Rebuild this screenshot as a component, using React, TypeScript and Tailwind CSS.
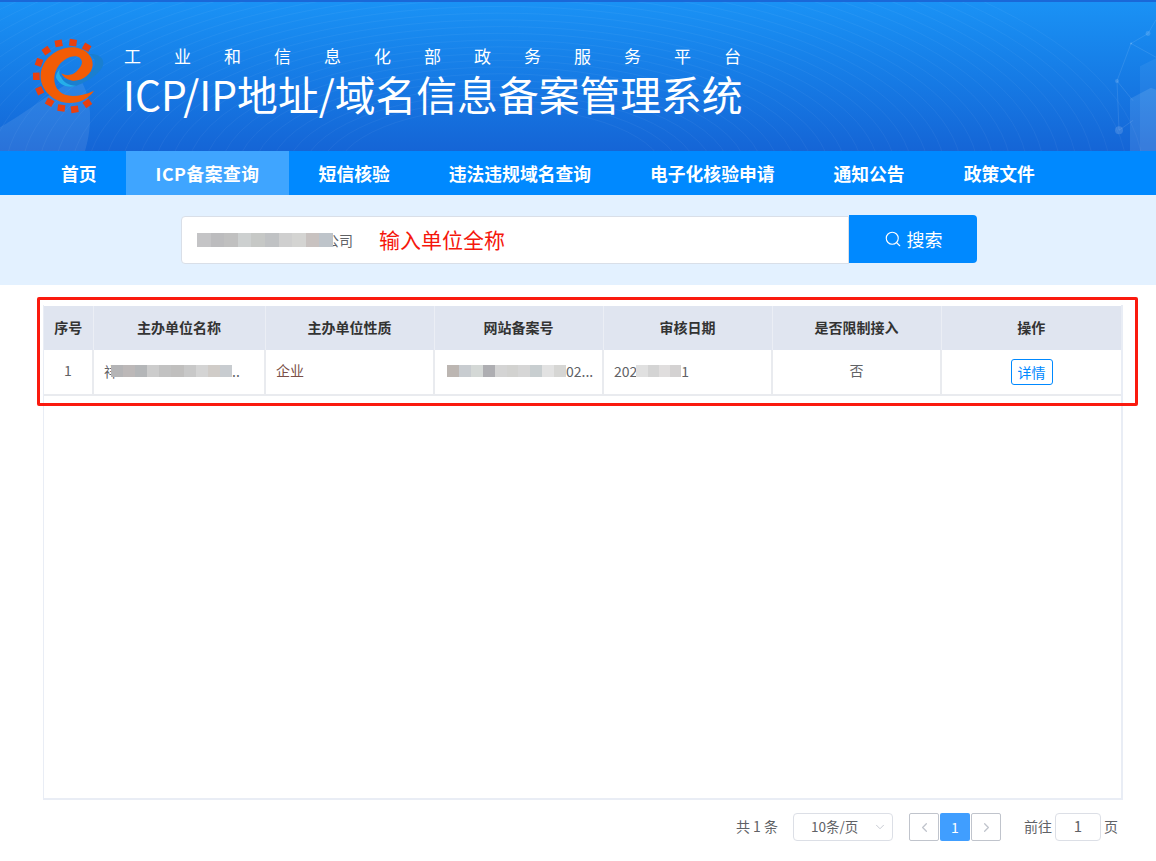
import { ChevronDown, ChevronLeft, ChevronRight, Search } from 'lucide-react';

const navItems = ['首页', 'ICP备案查询', '短信核验', '违法违规域名查询', '电子化核验申请', '通知公告', '政策文件'];
const platform = ['工', '业', '和', '信', '息', '化', '部', '政', '务', '服', '务', '平', '台'];
const columns = ['序号', '主办单位名称', '主办单位性质', '网站备案号', '审核日期', '是否限制接入', '操作'];

const searchBlur = ['bg-[#c4c4c6]', 'bg-[#bcbcbe]', 'bg-[#c0c0c0]', 'bg-[#cdd0d0]', 'bg-[#c6c8c6]', 'bg-[#c0c2c4]', 'bg-[#cfcfcf]', 'bg-[#d4d4d2]', 'bg-[#c8c2c0]', 'bg-[#bec4ca]'];
const nameBlur = ['bg-[#b4b4b6]', 'bg-[#bcb8b8]', 'bg-[#b4b6b8]', 'bg-[#cccccc]', 'bg-[#c2c2c2]', 'bg-[#c0bfbe]', 'bg-[#c8c8c8]', 'bg-[#d4d4d4]', 'bg-[#d0ccc8]', 'bg-[#c8ccd0]'];
const numberBlur = ['bg-[#bcb6b2]', 'bg-[#c8ccd0]', 'bg-[#d4d8d6]', 'bg-[#aeaeb2]', 'bg-[#d4d4d4]', 'bg-[#d2d2d0]', 'bg-[#d6d6d6]', 'bg-[#c8ced0]', 'bg-[#e2e2e2]', 'bg-[#d6d6d4]'];
const dateBlur = ['bg-[#e0e0e0]', 'bg-[#d4d4d4]', 'bg-[#e0dede]', 'bg-[#d4d2d2]'];

function Blur({ colors, className }: { colors: string[]; className: string }) {
    return (
        <span className={`relative inline-flex align-middle ${className}`}>
            {colors.map((c, i) => (
                <span key={i} className={`h-full flex-1 ${c}`} />
            ))}
        </span>
    );
}

function Logo() {
    const teeth = [
        [92, 28, -10], [135, 26, 8], [176, 40, 30], [55, 50, -35], [33, 85, -70], [25, 127, 88],
        [35, 170, 65], [65, 205, 30], [100, 222, 8], [140, 226, -8], [178, 208, -35],
    ];
    return (
        <svg viewBox="0 0 252 252" className="h-[84px] w-[84px] shrink-0">
            {teeth.map(([x, y, r], i) => (
                <rect key={i} x={x - 11} y={y - 10} width="22" height="20" fill="#e8400f" transform={`rotate(${r} ${x} ${y})`} />
            ))}
            <path d="M84 130C92 150 115 165 145 155C185 142 228 110 226 85C224 65 200 58 184 60C203 72 208 90 190 112C170 136 125 150 100 130C94 124 92 112 97 104C88 112 84 120 84 130Z" fill="#1a7fd0" />
            <path d="M84 130C92 150 115 165 145 155C125 156 105 145 100 130C94 124 92 112 97 104C88 112 84 120 84 130Z" fill="#25aeea" />
            <path d="M198 170C180 198 140 214 102 204C64 192 36 160 38 122C42 76 84 42 130 40C168 40 196 64 194 94C192 120 164 142 134 140C118 138 106 130 100 118C112 126 132 126 146 112C160 98 168 84 156 72C142 60 112 70 94 92C76 114 72 150 94 172C112 190 150 192 198 170Z" fill="#f25c05" />
        </svg>
    );
}

function HeaderArt() {
    const rings = Array.from({ length: 30 }, (_, i) => 110 + i * 11);
    return (
        <svg viewBox="0 0 1156 151" preserveAspectRatio="none" className="absolute inset-0 h-full w-full">
            {rings.map((r) => (
                <ellipse key={r} cx="500" cy="175" rx={r * 1.5} ry={r * 0.62} fill="none" stroke="#ffffff" strokeOpacity="0.05" strokeWidth="1" />
            ))}
            <path d="M0 127C30 110 62 82 80 78C92 96 93 125 85 151H0Z" fill="#ffffff" fillOpacity="0.09" />
            <g fill="#ffffff">
                <path d="M1140 65L1156 57V151H1140Z" fillOpacity="0.06" />
                <path d="M1130 98L1151 87L1156 89V151H1130Z" fillOpacity="0.1" />
                <circle cx="1119" cy="130" r="4" fillOpacity="0.14" />
                <circle cx="1117" cy="80" r="2" fillOpacity="0.14" />
                <circle cx="1131" cy="42" r="1" fillOpacity="0.2" />
                <circle cx="1148" cy="32" r="2.5" fillOpacity="0.14" />
            </g>
            <path d="M1156 18L1148 32L1131 42L1117 80L1119 130M1131 42L1156 56M1117 80L1133 100M1119 130L1133 120" fill="none" stroke="#ffffff" strokeOpacity="0.1" />
        </svg>
    );
}

export default function App() {
    return (
        <div className="relative h-[861px] w-[1156px] overflow-hidden bg-white font-['Noto_Sans_CJK_SC','Liberation_Sans',sans-serif]">
            <header className="relative h-[151px] overflow-hidden border-t-2 border-[#1a68d8] bg-gradient-to-b from-[#1a92f5] to-[#1565d6]">
                <HeaderArt />
                <div className="relative flex items-start pl-[28px] pt-[32px]">
                    <Logo />
                    <div className="ml-[12px] mt-[10px] w-[650px] text-white">
                        <div className="flex h-6 items-center text-[17px] leading-6">
                            {platform.map((c, i) => (
                                <span key={i} className="w-[50px] shrink-0">{c}</span>
                            ))}
                        </div>
                        <h1 className="-ml-px mt-px whitespace-nowrap text-[40.8px] font-normal leading-[50px]">ICP/IP地址/域名信息备案管理系统</h1>
                    </div>
                </div>
            </header>

            <nav className="flex h-11 bg-[#0089ff] pl-[31.5px] text-[17.8px] font-bold leading-[44px] text-white">
                {navItems.map((item) => (
                    <a key={item} className={`whitespace-nowrap px-[29.5px] ${item === 'ICP备案查询' ? 'bg-[#3fa5ff] tracking-[0.5px]' : ''}`}>
                        {item}
                    </a>
                ))}
            </nav>

            <section className="flex h-[90px] items-start justify-center bg-[#e3f1ff] pl-[2px] pt-5">
                <div className="mt-px flex h-12 w-[668px] items-center rounded-l border border-[#d9dfe8] bg-white pl-[15px] text-[14px] text-[#606266]">
                    <Blur colors={searchBlur} className="z-10 h-[14px] w-[136px]" />
                    <span className="-ml-[8px] whitespace-nowrap">公司</span>
                    <span className="ml-[26px] text-[21px] text-[#f5170c]">输入单位全称</span>
                </div>
                <button className="flex h-12 w-[128px] items-center justify-center gap-[5px] rounded-r bg-[#0089ff] text-[18px] text-white">
                    <Search size={18} strokeWidth={1.5} />
                    搜索
                </button>
            </section>

            <section className="ml-[43px] mt-5 h-[495px] w-[1080px] border-x border-b-2 border-r-2 border-[#e9edf5] pt-px">
                <table className="w-full table-fixed border-collapse text-[14px]">
                    <colgroup>
                        <col className="w-[49px]" />
                        <col className="w-[172px]" />
                        <col className="w-[169px]" />
                        <col className="w-[169px]" />
                        <col className="w-[169px]" />
                        <col className="w-[169px]" />
                        <col />
                    </colgroup>
                    <thead>
                        <tr className="h-[44px] bg-[#e0e5f0] text-[#333333]">
                            {columns.map((c) => (
                                <th key={c} className="border-r border-[#ebeef5] pb-px text-[14px] font-bold last:border-r-0">{c}</th>
                            ))}
                        </tr>
                    </thead>
                    <tbody>
                        <tr className="h-[45px] border-b-2 border-[#e9ebef] text-[#606266]">
                            <td className="border-r-2 border-[#e9ebef] pb-[3px] text-center">1</td>
                            <td className="whitespace-nowrap border-r-2 border-[#e9ebef] pb-[3px] pl-[10px]">
                                <span className="align-middle">祥</span>
                                <Blur colors={nameBlur} className="-ml-[7px] h-[12px] w-[121px]" />
                                <span className="align-middle">..</span>
                            </td>
                            <td className="border-r-2 border-[#e9ebef] pb-[3px] pl-[10px] text-[#7a5048]">企业</td>
                            <td className="whitespace-nowrap border-r-2 border-[#e9ebef] pb-[3px] pl-[12px]">
                                <Blur colors={numberBlur} className="h-[12px] w-[119px]" />
                                <span className="align-middle">02...</span>
                            </td>
                            <td className="whitespace-nowrap border-r-2 border-[#e9ebef] pb-[3px] pl-[10px]">
                                <span className="align-middle">202</span>
                                <Blur colors={dateBlur} className="-ml-px h-[12px] w-[45px]" />
                                <span className="align-middle">1</span>
                            </td>
                            <td className="border-r-2 border-[#e9ebef] pb-[3px] text-center">否</td>
                            <td className="text-center">
                                <button className="h-[26px] w-[42px] rounded-[3px] border border-[#0089ff] text-[14px] leading-[22px] text-[#0089ff]">详情</button>
                            </td>
                        </tr>
                    </tbody>
                </table>
            </section>

            <footer className="mr-[38px] mt-[13px] flex h-7 items-center justify-end text-[14px] text-[#606266]">
                <span className="pb-px">共 1 条</span>
                <div className="ml-[15px] flex h-7 w-[100px] items-center rounded border border-[#dcdfe6] pb-px pl-[17px] pr-[5px] text-[13.5px]">
                    <span className="flex-1">10条/页</span>
                    <ChevronDown size={14} strokeWidth={1.5} className="text-[#c0c4cc]" />
                </div>
                <div className="ml-[16px] flex h-7 gap-px">
                    <button className="flex h-7 w-[30px] items-center justify-center rounded-[2px] border border-[#c0c4cc] text-[#c0c4cc]">
                        <ChevronLeft size={15} strokeWidth={2} />
                    </button>
                    <button className="h-7 w-[30px] rounded-[2px] bg-[#409eff] text-white">1</button>
                    <button className="flex h-7 w-[30px] items-center justify-center rounded-[2px] border border-[#c0c4cc] text-[#c0c4cc]">
                        <ChevronRight size={15} strokeWidth={2} />
                    </button>
                </div>
                <span className="ml-[23px] pb-px">前往</span>
                <div className="ml-[3px] flex h-7 w-[46px] items-center justify-center rounded border border-[#dcdfe6] pb-px text-[15px]">1</div>
                <span className="ml-[3px] pb-px">页</span>
            </footer>

            {/* annotation drawn over the results */}
            <div className="pointer-events-none absolute left-[37px] top-[297px] h-[109px] w-[1101px] rounded-[2px] border-[3px] border-[#fa1a0f]" />
        </div>
    );
}
